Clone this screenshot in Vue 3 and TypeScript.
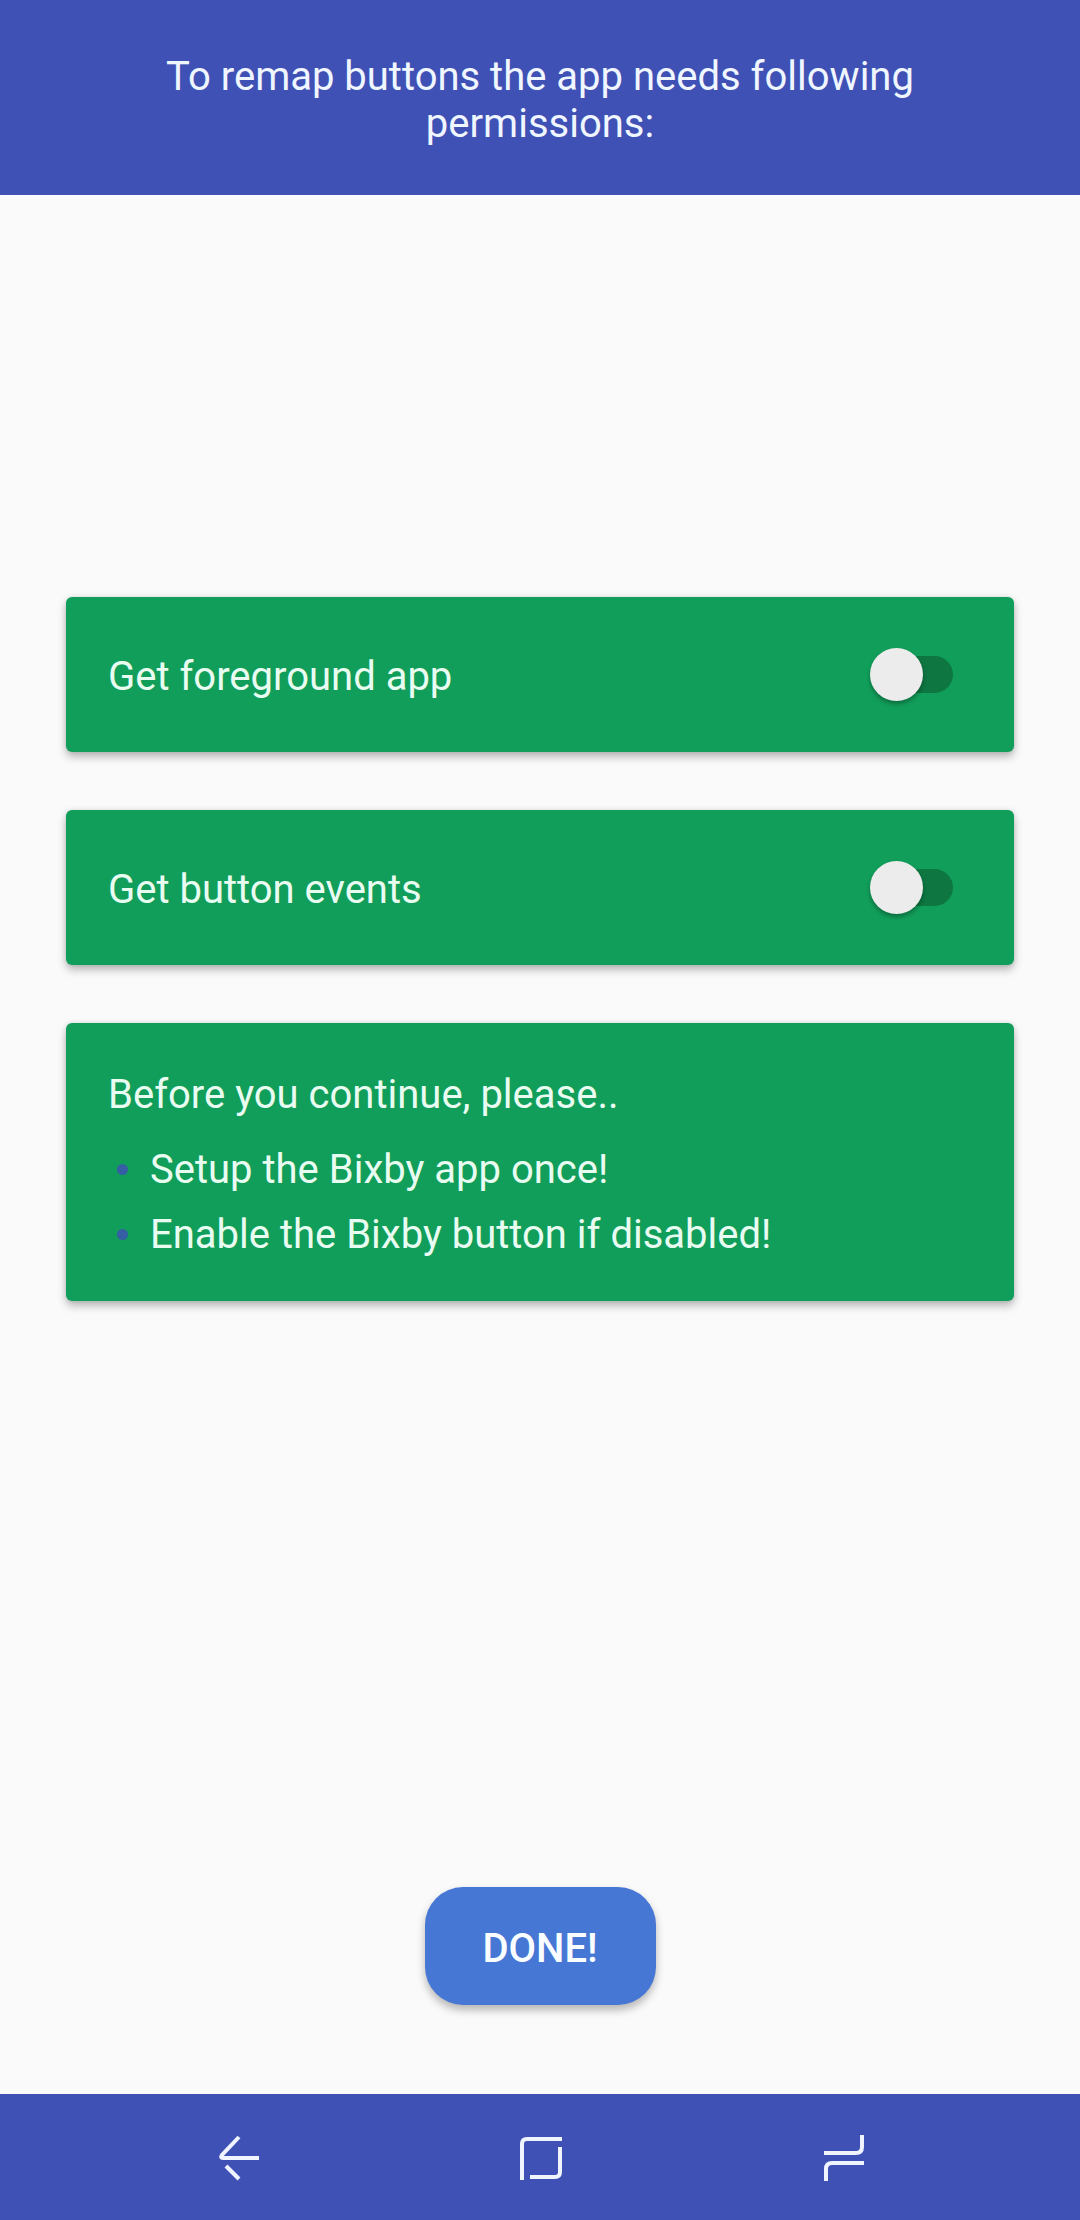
<script setup lang="ts">
import { ref } from 'vue'

interface Permission {
  id: string
  label: string
  granted: boolean
}

const permissions = ref<Permission[]>([
  { id: 'foreground-app', label: 'Get foreground app', granted: false },
  { id: 'button-events', label: 'Get button events', granted: false },
])

const steps: string[] = ['Setup the Bixby app once!', 'Enable the Bixby button if disabled!']
</script>

<template>
  <div class="screen">
    <header class="header">
      <h1 class="title">To remap buttons the app needs following permissions:</h1>
    </header>

    <main class="content">
      <div class="cards">
        <section v-for="item in permissions" :key="item.id" class="card permission">
          <label class="label" :for="item.id">{{ item.label }}</label>
          <input :id="item.id" v-model="item.granted" class="switch" type="checkbox" role="switch" />
        </section>

        <section class="card notes">
          <p class="intro">Before you continue, please..</p>
          <ul class="steps">
            <li v-for="step in steps" :key="step" class="step">{{ step }}</li>
          </ul>
        </section>
      </div>

      <button class="done" type="button">DONE!</button>
    </main>

    <nav class="navbar" aria-label="System navigation">
      <button class="nav-button" type="button" aria-label="Back">
        <svg class="nav-icon" viewBox="0 0 48 48" aria-hidden="true">
          <path d="M45 25H9Q6 25 8 22L25 4" />
          <path d="M12 33L25 46" />
        </svg>
      </button>
      <button class="nav-button" type="button" aria-label="Home">
        <svg class="nav-icon" viewBox="0 0 48 48" aria-hidden="true">
          <path d="M6 47V11Q6 6 11 6H46" />
          <path d="M44 14V39Q44 44 39 44H14" />
        </svg>
      </button>
      <button class="nav-button" type="button" aria-label="Recent apps">
        <svg class="nav-icon" viewBox="0 0 48 48" aria-hidden="true">
          <path d="M6 20H38Q44 20 44 14V2" />
          <path d="M46 30H14Q8 30 8 36V48" />
        </svg>
      </button>
    </nav>
  </div>
</template>

<style>
body {
  margin: 0;
  background: #fafafa;
}
</style>

<style scoped>
.screen {
  display: flex;
  flex-direction: column;
  min-height: 100vh;
  background: #fafafa;
  font-family: Roboto, 'Liberation Sans', sans-serif;
  font-size: 40px;
  line-height: 47px;
}

.header {
  padding: 53px 66px 48px;
  background: #3f51b5;
}

.title {
  max-width: 820px;
  margin: 0 auto;
  color: #f0f6ff;
  font-size: 40px;
  font-weight: 400;
  text-align: center;
}

.content {
  display: flex;
  flex: 1;
  flex-direction: column;
  align-items: center;
  padding: 0 66px 89px;
}

.cards {
  display: flex;
  flex: 1;
  flex-direction: column;
  align-self: stretch;
  justify-content: center;
  gap: 58px;
}

.card {
  border-radius: 6px;
  background: #119e5a;
  box-shadow: 0 5px 8px rgba(0, 0, 0, 0.26), 0 0 5px rgba(0, 0, 0, 0.1);
  color: #e9fcf1;
}

.permission {
  display: flex;
  align-items: center;
  justify-content: space-between;
  padding: 51px 61px 51px 42px;
}

.label {
  flex: 1;
  padding: 5px 0 1px;
}

.switch {
  position: relative;
  width: 75px;
  height: 37px;
  margin: 0;
  border-radius: 19px;
  background: #0d7641;
  appearance: none;
}

.switch::before {
  position: absolute;
  top: -8px;
  left: -8px;
  width: 53px;
  height: 53px;
  border-radius: 50%;
  background: #ececec;
  box-shadow: 0 3px 4px rgba(0, 0, 0, 0.3);
  content: '';
}

.switch:checked::before {
  right: -8px;
  left: auto;
}

.notes {
  padding: 48px 42px 43px;
}

.intro {
  margin: 0 0 28px;
}

.steps {
  display: flex;
  flex-direction: column;
  gap: 18px;
  margin: 0;
  padding: 0 0 0 9px;
  list-style: none;
}

.step {
  display: flex;
  align-items: center;
  gap: 22px;
}

.step::before {
  width: 11px;
  height: 11px;
  border-radius: 50%;
  background: #355ea4;
  content: '';
}

.done {
  min-width: 231px;
  height: 118px;
  margin-top: 184px;
  padding: 4px 48px 0;
  border: 0;
  border-radius: 38px;
  background: #4677d4;
  box-shadow: 0 5px 8px rgba(0, 0, 0, 0.28);
  color: #fafdff;
  font: 500 40px/47px Roboto, 'Liberation Sans', sans-serif;
}

.navbar {
  display: grid;
  grid-template-columns: repeat(3, 28%);
  justify-content: center;
  background: #3f51b5;
}

.nav-button {
  display: flex;
  justify-content: center;
  padding: 39px 0;
  border: 0;
  background: none;
}

.nav-icon {
  width: 48px;
  height: 48px;
  fill: none;
  stroke: #eff4ff;
  stroke-width: 4;
}
</style>
